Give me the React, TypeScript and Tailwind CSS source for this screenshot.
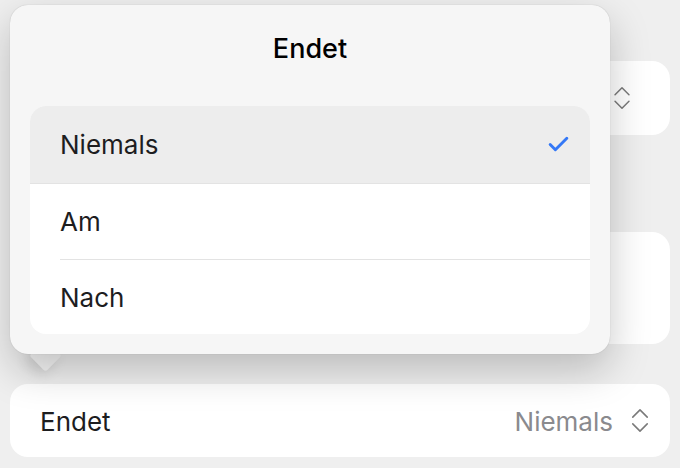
import { Check } from 'lucide-react';

const options = ['Niemals', 'Am', 'Nach'];

function UpDown({ className }: { className?: string }) {
  return (
    <svg viewBox="0 0 18 28" className={className} fill="none" stroke="currentColor" strokeWidth={1.6} strokeLinecap="round" strokeLinejoin="round">
      <path d="M1.5 10.5 9 3l7.5 7.5" />
      <path d="M1.5 17.5 9 25l7.5-7.5" />
    </svg>
  );
}

export default function App() {
  const selected = 'Niemals';

  return (
    <div className="relative h-[468px] w-[680px] overflow-hidden bg-[#efefef] font-['Inter',sans-serif] text-[#1d1d1f]">
      {/* form behind the popover */}
      <div className="flex flex-col px-[10px] pt-[61px]">
        <div className="flex h-[74px] items-center justify-end rounded-[18px] bg-white pr-[39px]">
          <UpDown className="h-[26px] w-[18px] text-[#7a7a7a]" />
        </div>
        <div className="mt-[97px] h-[112px] rounded-[18px] bg-white" />
        <div className="mt-[40px] flex h-[73px] items-center justify-between rounded-[18px] bg-white pl-[30px] pr-[21px] text-[26px]">
          <span className="pt-[2px]">Endet</span>
          <div className="flex items-center gap-[18px]">
            <span className="pt-[2px] text-[#8a8a8e]">Niemals</span>
            <UpDown className="h-[27px] w-[18px] text-[#7a7a7a]" />
          </div>
        </div>
      </div>

      {/* popover */}
      <div className="absolute left-[10px] top-[5px] w-[600px]">
        <div className="absolute left-[24px] top-[339px] h-[23px] w-[23px] rotate-45 rounded-[3px] bg-[#f6f6f6] shadow-[0_6px_14px_rgba(0,0,0,0.12)]" />
        <div className="relative rounded-[18px] bg-[#f6f6f6] px-[20px] pb-[20px] shadow-[0_16px_40px_rgba(0,0,0,0.22),0_0_1px_rgba(0,0,0,0.25)]">
          <div className="flex h-[101px] items-start justify-center pt-[24px] text-[27px] font-medium text-black">
            Endet
          </div>
          <div className="overflow-hidden rounded-[16px] bg-white">
            {options.map((option, i) => (
              <div
                key={option}
                className={
                  i === 0
                    ? 'flex h-[78px] items-center justify-between border-b border-[#e3e3e3] bg-[#ededed] pl-[30px] pr-[19px]'
                    : 'pl-[30px]'
                }
              >
                {i === 0 ? (
                  <>
                    <span className="text-[26px]">{option}</span>
                    {selected === option && (
                      <Check size={25} strokeWidth={2.8} className="text-[#3478f6]" />
                    )}
                  </>
                ) : (
                  <div
                    className={
                      i === 1
                        ? 'flex h-[76px] items-center border-b border-[#e3e3e3] text-[26px]'
                        : 'flex h-[74px] items-center text-[26px]'
                    }
                  >
                    {option}
                  </div>
                )}
              </div>
            ))}
          </div>
        </div>
      </div>
    </div>
  );
}
